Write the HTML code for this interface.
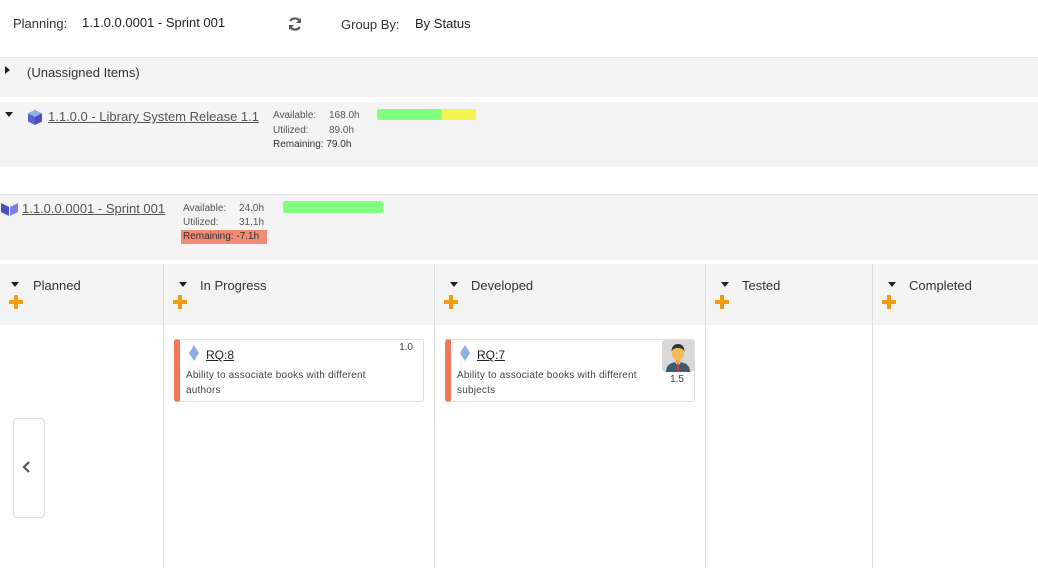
<!DOCTYPE html>
<html><head><meta charset="utf-8"><style>
*{margin:0;padding:0;box-sizing:border-box}
body{width:1038px;height:568px;overflow:hidden;background:#fff;font-family:"Liberation Sans",sans-serif;color:#333;position:relative}
.a{position:absolute}
.g{background:#f4f4f4}
.tri{width:0;height:0;border-left:4px solid transparent;border-right:4px solid transparent;border-top:5px solid #222}
.s{font-size:10px;color:#555}
.col{position:absolute;top:264px;height:304px;border-left:1px solid #ddd}
.ch{position:absolute;top:0;left:0;right:0;height:61px;background:#f4f4f4}
.ch .t{position:absolute;left:36px;top:14px;font-size:13px;color:#333}
.ch .tri{position:absolute;left:15px;top:18px}
.plus{position:absolute;left:9px;top:31px;width:14px;height:14px}
.plus:before{content:"";position:absolute;left:0;top:5px;width:14px;height:4px;background:#f39c12}
.plus:after{content:"";position:absolute;left:5px;top:0;width:4px;height:14px;background:#f39c12}
.card{position:absolute;top:339px;width:250px;height:63px;border:1px solid #ddd;border-left:6px solid #f07757;border-radius:3px;background:#fff}
.card .id{position:absolute;left:26px;top:8px;font-size:12px;color:#222;text-decoration:underline}
.card .d{position:absolute;left:6px;top:28px;font-size:10px;color:#444;line-height:15px;width:198px;letter-spacing:0.2px}
.dia{position:absolute;left:9px;top:5px}
</style></head><body>
<div class="a" style="left:13px;top:16px;font-size:13px;color:#333">Planning:</div>
<div class="a" style="left:82px;top:15px;font-size:13px;color:#222">1.1.0.0.0001 - Sprint 001</div>
<svg class="a" style="left:287px;top:16px" width="16" height="16" viewBox="0 0 16 16"><path d="M13 6A5.5 5.5 0 0 0 3.2 5" stroke="#555" stroke-width="2.2" fill="none"/><path d="M14 2v5h-5z" fill="#555"/><path d="M3 10a5.5 5.5 0 0 0 9.8 1" stroke="#555" stroke-width="2.2" fill="none"/><path d="M2 14V9h5z" fill="#555"/></svg>
<div class="a" style="left:341px;top:17px;font-size:13px;color:#333">Group By:</div>
<div class="a" style="left:415px;top:16px;font-size:13px;color:#222">By Status</div>

<div class="a g" style="left:0;top:57px;width:1038px;height:40px;border-top:1px solid #e6e6e6"></div>
<div class="a" style="left:5px;top:66px;width:0;height:0;border-top:4px solid transparent;border-bottom:4px solid transparent;border-left:5px solid #222"></div>
<div class="a" style="left:27px;top:65px;font-size:13px;color:#333">(Unassigned Items)</div>

<div class="a g" style="left:0;top:102px;width:1038px;height:65px"></div>
<div class="a tri" style="left:5px;top:112px"></div>
<svg class="a" style="left:27px;top:109px" width="16" height="16" viewBox="0 0 16 16"><path d="M8 1l7 3.5v8L8 16 1 12.5v-8z" fill="#5a5fd0"/><path d="M8 1l7 3.5L8 8 1 4.5z" fill="#8fb0e8"/><path d="M8 8l7-3.5v8L8 16z" fill="#4a50c0"/></svg>
<div class="a" style="left:48px;top:109px;font-size:13px;color:#555;text-decoration:underline">1.1.0.0 - Library System Release 1.1</div>
<div class="a s" style="left:273px;top:110px">Available:</div><div class="a s" style="left:329px;top:110px">168.0h</div>
<div class="a s" style="left:273px;top:125px">Utilized:</div><div class="a s" style="left:329px;top:125px">89.0h</div>
<div class="a s" style="left:273px;top:139px;color:#333">Remaining: 79.0h</div>
<div class="a" style="left:377px;top:109px;width:65px;height:11px;background:#80ff80;border-radius:2px 0 0 2px"></div>
<div class="a" style="left:442px;top:109px;width:34px;height:11px;background:#f3f352;border-radius:0 2px 2px 0"></div>

<div class="a g" style="left:0;top:194px;width:1038px;height:66px;border-top:1px solid #e6e6e6"></div>
<svg class="a" style="left:1px;top:201px" width="17" height="15" viewBox="0 0 17 15"><path d="M0 2l8 4v9L0 11z" fill="#4a50c0"/><path d="M17 2l-8 4v9l8-4z" fill="#7a80e8"/></svg>
<div class="a" style="left:22px;top:201px;font-size:13px;color:#555;text-decoration:underline">1.1.0.0.0001 - Sprint 001</div>
<div class="a s" style="left:183px;top:203px">Available:</div><div class="a s" style="left:239px;top:203px">24.0h</div>
<div class="a s" style="left:183px;top:217px">Utilized:</div><div class="a s" style="left:239px;top:217px">31.1h</div>
<div class="a" style="left:181px;top:230px;width:86px;height:14px;background:#f28b74"></div>
<div class="a s" style="left:183px;top:231px;color:#333">Remaining: -7.1h</div>
<div class="a" style="left:283px;top:201px;width:100px;height:12px;background:#80ff80;border-radius:2px"></div>

<div class="col" style="left:0;width:163px;border-left:none"><div class="ch"><div class="tri" style="left:11px"></div><div class="t" style="left:33px">Planned</div><div class="plus"></div></div></div>
<div class="col" style="left:163px;width:271px"><div class="ch"><div class="tri"></div><div class="t">In Progress</div><div class="plus"></div></div></div>
<div class="col" style="left:434px;width:271px"><div class="ch"><div class="tri"></div><div class="t">Developed</div><div class="plus"></div></div></div>
<div class="col" style="left:705px;width:167px"><div class="ch"><div class="tri"></div><div class="t">Tested</div><div class="plus"></div></div></div>
<div class="col" style="left:872px;width:166px"><div class="ch"><div class="tri"></div><div class="t">Completed</div><div class="plus"></div></div></div>

<div class="card" style="left:174px"><svg class="dia" width="10" height="16" viewBox="0 0 10 16"><path d="M5 0l5 8-5 8-5-8z" fill="#8fb0e0"/></svg><div class="id">RQ:8</div><div class="a" style="right:10px;top:2px;font-size:10px;color:#444">1.0</div><div class="d">Ability to associate books with different authors</div></div>
<div class="card" style="left:445px"><svg class="dia" width="10" height="16" viewBox="0 0 10 16"><path d="M5 0l5 8-5 8-5-8z" fill="#8fb0e0"/></svg><div class="id">RQ:7</div><div class="d">Ability to associate books with different subjects</div>
<svg class="a" style="right:0;top:0" width="32" height="32" viewBox="0 0 32 32"><rect width="32" height="32" rx="3" fill="#d8d8d8"/><path d="M4 32c0-7 5-10 12-10s12 3 12 10z" fill="#3d5a6e"/><path d="M13 22l3 4 3-4z" fill="#fff"/><path d="M15.3 23h1.4l.6 9h-2.6z" fill="#d33"/><rect x="13.5" y="17" width="5" height="6" fill="#f0a64a"/><ellipse cx="16" cy="13" rx="6" ry="7" fill="#f7b955"/><path d="M9.5 12c0-6 3-8 6.5-8s6.5 2 6.5 8c-1-3-3-4-6.5-4s-5.5 1-6.5 4z" fill="#333"/></svg>
<div class="a" style="right:10px;top:34px;font-size:10px;color:#444">1.5</div></div>

<div class="a" style="left:13px;top:418px;width:32px;height:100px;border:1px solid #ddd;border-radius:4px;background:#fff"></div>
<svg class="a" style="left:22px;top:461px" width="10" height="12" viewBox="0 0 10 12"><path d="M7 1L2 6l5 5" stroke="#555" stroke-width="2.2" fill="none"/></svg>
</body></html>
